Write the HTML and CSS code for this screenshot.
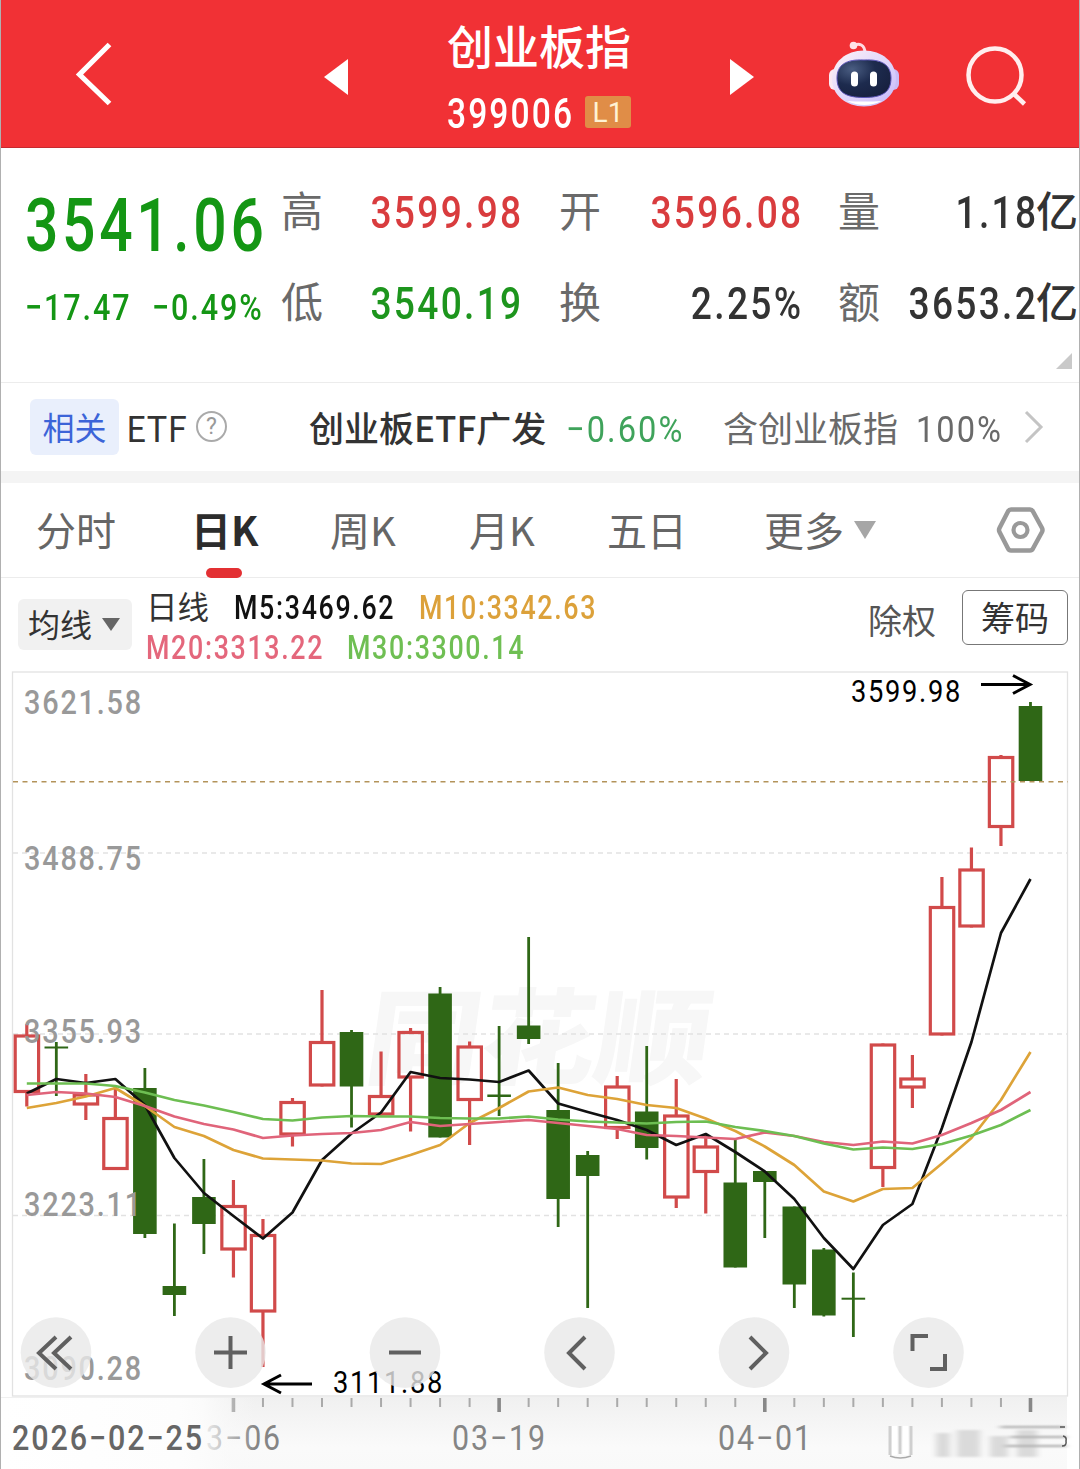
FILE: index.html
```html
<!DOCTYPE html>
<html lang="zh-CN">
<head>
<meta charset="utf-8">
<title>创业板指 399006</title>
<link rel="stylesheet" href="styles.css">
</head>
<body>
<main class="page">
  <header class="topbar">
    <svg class="back" width="40" height="66" viewBox="0 0 40 66"><path d="M35.500 3.500L5.500 33.500L35.500 62.500" fill="none" stroke="#fff" stroke-width="5.200"/></svg>
    <svg class="prev" width="24" height="36" viewBox="0 0 24 36"><path d="M24 0V36L0 18Z" fill="#fff"/></svg>
    <div class="heading">
      <h1>创业板指</h1>
      <div class="code"><span class="num">399006</span><span class="level">L1</span></div>
    </div>
    <svg class="next" width="24" height="36" viewBox="0 0 24 36"><path d="M0 0V36L24 18Z" fill="#fff"/></svg>
    <svg class="robot" width="72" height="67" viewBox="0 0 72 67">
      <defs>
        <linearGradient id="shell" x1="0" y1="0" x2="1" y2="1"><stop offset="0" stop-color="#fff3f7"/><stop offset=".6" stop-color="#dcd2fb"/><stop offset="1" stop-color="#c6b6f8"/></linearGradient>
        <radialGradient id="visor" cx=".28" cy=".25" r=".85"><stop offset="0" stop-color="#4a5d82"/><stop offset=".5" stop-color="#1d2b4e"/><stop offset="1" stop-color="#17203f"/></radialGradient>
      </defs>
      <path d="M25 5C31 1 37 4 37 12" fill="none" stroke="#ffdbe2" stroke-width="3"/>
      <circle cx="25.500" cy="4.500" r="3.800" fill="#ffe3e8"/>
      <rect x="1" y="28" width="12" height="21" rx="6" fill="#fbeaf3"/>
      <rect x="59" y="28" width="12" height="21" rx="6" fill="#c9bcf6"/>
      <path d="M36 9.500C54 9.500 68 21 68 38C68 54 54 65.500 36 65.500C18 65.500 4 54 4 38C4 21 18 9.500 36 9.500Z" fill="url(#shell)"/>
      <path d="M19 60Q36 68 54 60Q36 61 19 60Z" fill="#fff"/>
      <path d="M36 19C54 18 63 24 63 37C63 51 55 56.500 36 56.500C17 56.500 9 51 9 37C9 24 18 18 36 19Z" fill="url(#visor)" stroke="#5c55b8" stroke-width="1"/>
      <rect x="23" y="30.500" width="7" height="15" rx="3.500" fill="#fff"/><rect x="42" y="30.500" width="7" height="15" rx="3.500" fill="#fff"/>
    </svg>
    <svg class="search" width="62" height="62" viewBox="0 0 62 62"><circle cx="29" cy="29" r="26.500" fill="none" stroke="#ffeeee" stroke-width="4.500"/><path d="M47.500 47.500L58.500 58" stroke="#ffeeee" stroke-width="4.500"/></svg>
  </header>

  <section class="quote">
    <div class="price">
      <div class="last num">3541.06</div>
      <div class="change"><span class="num">−17.47</span><span class="num">−0.49%</span></div>
    </div>
    <dl class="stats">
      <dt>高</dt><dd class="up"><span class="num">3599.98</span></dd>
      <dt>开</dt><dd class="up"><span class="num">3596.08</span></dd>
      <dt>量</dt><dd><span class="num">1.18</span><span class="unit">亿</span></dd>
      <dt>低</dt><dd class="down"><span class="num">3540.19</span></dd>
      <dt>换</dt><dd><span class="num">2.25%</span></dd>
      <dt>额</dt><dd><span class="num">3653.2</span><span class="unit">亿</span></dd>
    </dl>
    <i class="corner"></i>
  </section>

  <section class="related">
    <span class="tag">相关</span><span class="etf">ETF</span><span class="help">?</span>
    <strong>创业板ETF广发</strong><span class="num pct">−0.60%</span>
    <span class="hold">含创业板指</span><span class="num share">100%</span>
    <svg class="more" width="20" height="34" viewBox="0 0 20 34"><path d="M2 2L17 17L2 32" fill="none" stroke="#c4c4c4" stroke-width="3"/></svg>
  </section>

  <nav class="tabs">
    <a>分时</a><a class="active">日K</a><a>周K</a><a>月K</a><a>五日</a><a class="menu">更多<i></i></a>
    <svg class="settings" width="50" height="48" viewBox="0 0 50 48"><path d="M15 3.500H34Q36 3.500 37 5.500L46 22Q47 24 46 26L37 42.500Q36 44.500 34 44.500H15Q13 44.500 12 42.500L3.500 26Q2.500 24 3.500 22L12 5.500Q13 3.500 15 3.500Z" fill="none" stroke="#999" stroke-width="4.500"/><circle cx="24.500" cy="24" r="7" fill="none" stroke="#999" stroke-width="4.200"/></svg>
  </nav>

  <section class="legend">
    <div class="picker">均线<i></i></div>
    <div class="averages">
      <div class="line"><b>日线</b><span class="num m5">M5:3469.62</span><span class="num m10">M10:3342.63</span></div>
      <div class="line"><span class="num m20">M20:3313.22</span><span class="num m30">M30:3300.14</span></div>
    </div>
    <span class="adjust">除权</span><span class="chips">筹码</span>
  </section>

  <svg id="chart" class="chart" width="1078" height="799" viewBox="1 670 1078 799">
    <defs>
      <linearGradient id="foot" x1="0" y1="0" x2="0" y2="1"><stop offset="0" stop-color="#f0f0f0"/><stop offset=".7" stop-color="#fafafa"/><stop offset="1" stop-color="#f9f9f9"/></linearGradient>
      <linearGradient id="fade" x1="0" y1="0" x2="1" y2="0"><stop offset="0" stop-color="#fff"/><stop offset=".7" stop-color="#fdfdfd"/><stop offset=".79" stop-color="#fcfcfc" stop-opacity=".9"/><stop offset="1" stop-color="#f8f8f8" stop-opacity="0"/></linearGradient>
      <filter id="soft" x="-20%" y="-20%" width="140%" height="140%"><feGaussianBlur stdDeviation="3 1"/></filter>
    </defs>
    <rect x="1" y="1397" width="1066" height="72" fill="url(#foot)"/>
    <g class="mark" transform="translate(362 1076) skewX(-8)"><text textLength="344" lengthAdjust="spacingAndGlyphs">同花顺</text></g>
    <g class="grid"><path d="M13 853H1067M13 1034H1067M13 1215.500H1067" stroke-dasharray="5 4"/><rect x="12.500" y="672" width="1055" height="724"/></g>
    <g id="ticks"></g>
    <g id="candles"></g>
    <path d="M13 781.700H1068" stroke="#b3935a" stroke-width="1.400" stroke-dasharray="5 4.500"/>
    <g id="averages"></g>
    <g class="axis">
      <text x="24" y="714" textLength="119">3621.58</text>
      <text x="24" y="870" textLength="119">3488.75</text>
      <text x="24" y="1043" textLength="119">3355.93</text>
      <text x="24" y="1216" textLength="119">3223.11</text>
      <text x="24" y="1380" textLength="119">3090.28</text>
    </g>
    <g class="note">
      <text x="851" y="701.500" textLength="111">3599.98</text><path d="M981 684.500H1029M1013 675.500L1030 684.500L1013 693.500"/>
      <text x="333" y="1392.500" textLength="111">3111.88</text><path d="M312 1384H265M281 1375L264 1384L281 1393"/>
    </g>
    <g class="dates">
      <text x="206" y="1449.500" textLength="76">3−06</text>
      <rect x="1" y="1398" width="255" height="71" fill="url(#fade)"/>
      <text class="first" x="12" y="1449.500" textLength="192">2026−02−25</text>
      <text x="452" y="1449.500" textLength="95">03−19</text>
      <text x="718" y="1449.500" textLength="95">04−01</text>
    </g>
    <g filter="url(#soft)">
      <path d="M936 1433H950V1457H936ZM957 1430H980V1457H957ZM990 1436H1008V1457H990ZM1017 1430H1037V1457H1017Z" fill="#dadada"/>
      <path d="M1000 1427H1064M1010 1437H1066M1005 1446H1066" stroke="#aaa" stroke-width="2"/>
    </g>
    <path d="M890 1426V1455M900 1426V1454M911 1426V1455" stroke="#cfcfcf" stroke-width="3"/>
    <path d="M894.500 1426V1455M905.500 1426V1455" stroke="#fff" stroke-width="5"/>
    <path d="M1060 1427H1065M1063 1436Q1067 1437 1066 1441Q1067 1446 1062 1446" stroke="#555" stroke-width="1.500" fill="none"/>
    <path d="M890 1456Q900 1460 911 1456" fill="none" stroke="#aaa" stroke-width="1.500"/>
    <g class="controls">
      <circle cx="56" cy="1352.600" r="35.300"/><circle cx="230.500" cy="1352.600" r="35.300"/><circle cx="405" cy="1352.600" r="35.300"/><circle cx="579.500" cy="1352.600" r="35.300"/><circle cx="754" cy="1352.600" r="35.300"/><circle cx="928.500" cy="1352.600" r="35.300"/>
      <path d="M56 1337L39 1353L56 1369M71 1337L54 1353L71 1369M214 1352.500H247M230.500 1336V1369M389 1352.500H421M585 1337L569 1353L585 1369M750 1337L766 1353L750 1369M912.500 1351V1336H928M945 1354V1369H930"/>
    </g>
  </svg>
</main>
<script src="chart.js"></script>
</body>
</html>
```
FILE: styles.css
```css
* { box-sizing: border-box; }
body { margin: 0; background: #fff; font-family: Roboto, "Noto Sans CJK SC", sans-serif; color: #333; }
.page { width: 1080px; height: 1469px; overflow: hidden; border-left: 1px solid #b0b0b0; border-right: 1px solid #b0b0b0; }
.num { display: inline-block; flex: none; font-family: Roboto, sans-serif; white-space: nowrap; letter-spacing: .062em; transform: scaleX(.825); transform-origin: left center; }

.topbar { display: flex; height: 148px; margin: 0 -1px; background: #f13135; border: solid #c62a2f; border-width: 0 1px 1px; color: #fff; }
.topbar svg { flex: none; }
.back { margin: 41px 0 0 73px; }
.prev { margin: 59px 0 0 210px; }
.heading { width: 184px; margin: 13px 0 0 99px; }
.heading h1 { margin: 0; height: 62px; font: 500 46px/62px "Noto Sans CJK SC", sans-serif; white-space: nowrap; }
.code { display: flex; height: 42px; margin-top: 18px; font-size: 42px; font-weight: 500; line-height: 42px; }
.code .num { width: 138px; transform: scaleX(.8); }
.level { width: 46px; height: 32px; margin-top: 3px; border-radius: 3px; background: #e08d47; color: #fff2d4; font-size: 28px; font-weight: 400; line-height: 33px; text-align: center; }
.next { margin: 59px 0 0 99px; }
.robot { margin: 41px 0 0 74px; }
.search { margin: 46px 0 0 66px; }

.quote { position: relative; display: flex; height: 235px; border-bottom: 1px solid #ececec; }
.price { width: 280px; padding: 37px 0 0 24px; color: #149614; }
.last { height: 82px; font-size: 74px; font-weight: 500; line-height: 82px; transform: scaleX(.795); }
.change { display: flex; height: 48px; margin-top: 17px; font-size: 37px; font-weight: 500; line-height: 48px; }
.change .num { width: 127px; }
.stats { display: grid; grid-template-columns: 42px 198px 80px 200px 79px 198px; grid-auto-rows: 91px; margin: 18px 0 0; font-size: 42px; line-height: 91px; }
.stats dt { justify-self: end; color: #6a6a6a; font-family: "Noto Sans CJK SC", sans-serif; transform: translateY(-3px); }
.stats dd { display: flex; justify-content: flex-end; margin: 0; font-family: "Noto Sans CJK SC", sans-serif; font-weight: 500; }
.stats .num { margin-right: -.05em; font-size: 45px; line-height: 93px; transform-origin: right center; }
.stats .unit { transform: translateY(-3px); }
.up { color: #d93c3e; }
.down { color: #1d951d; }
.corner { position: absolute; right: 7px; bottom: 13px; border: 8.500px solid; border-color: transparent #c9c9c9 #c9c9c9 transparent; }

.related { display: flex; height: 88px; padding-left: 29px; font: 35px/87px "Noto Sans CJK SC", sans-serif; white-space: nowrap; }
.related > * { flex: none; }
.tag { width: 89px; height: 56px; margin-top: 16px; border-radius: 6px; background: #e9effc; color: #3c64d8; font-size: 32px; line-height: 54px; text-align: center; }
.etf { width: 70px; margin-left: 7px; }
.help { width: 31px; height: 31px; margin: 28px 0 0; border: 2px solid #aaa; border-radius: 50%; color: #999; font: 23px/27px Roboto, sans-serif; text-align: center; }
.related strong { width: 257px; margin-left: 82px; font-weight: 500; }
.related .num { font-size: 37.500px; line-height: 93px; transform: scaleX(.87); }
.related .pct { width: 157px; color: #3fa35b; }
.hold { width: 193px; color: #6a6a6a; }
.share { width: 108px; color: #6a6a6a; }
.more { margin-top: 27px; }

.tabs { display: flex; height: 107px; border-top: 12px solid #f4f4f4; border-bottom: 1px solid #ececec; font: 40px/92px "Noto Sans CJK SC", sans-serif; color: #666; white-space: nowrap; padding-left: 35px; }
.tabs > * { flex: none; }
.tabs a { width: 138px; }
.tabs a:first-child { width: 155px; }
.tabs a:nth-child(3) { width: 139px; }
.tabs a:nth-child(5) { width: 157px; }
.tabs .active { position: relative; width: 139px; color: #2c2c2c; font-weight: 700; }
.active::after { content: ""; position: absolute; left: 15px; bottom: -1px; width: 36px; height: 10px; border-radius: 5px; background: #e33033; }
.tabs .menu { display: flex; width: 232px; }
.menu i { width: 22px; height: 18px; margin: 38px 0 0 10px; background: #a6a6a6; clip-path: polygon(0 0, 100% 0, 50% 100%); }
.settings { margin-top: 23px; }

.legend { display: flex; height: 92px; font-family: "Noto Sans CJK SC", sans-serif; }
.legend > * { flex: none; }
.picker { display: flex; width: 114px; height: 51px; margin: 21px 0 0 17px; padding-left: 10px; border-radius: 6px; background: #f1f1f1; font-size: 32px; line-height: 49px; white-space: nowrap; }
.picker i { width: 18px; height: 13px; margin: 19px 0 0 10px; background: #666; clip-path: polygon(0 0, 100% 0, 50% 100%); }
.averages { width: 734px; padding: 10px 0 0 14px; }
.line { display: flex; height: 40px; font-size: 32.500px; font-weight: 500; line-height: 41px; }
.line b { width: 88px; margin-top: -3px; font-size: 31.500px; font-weight: 400; white-space: nowrap; }
.line .m5 { width: 185px; color: #111; }
.m10 { color: #dca13a; }
.line .m20 { width: 201px; color: #e4677c; }
.m30 { color: #6fbf53; }
.adjust { width: 94px; margin: 22px 0 0 2px; font-size: 34px; line-height: 40px; color: #555; }
.chips { width: 106px; height: 55px; margin-top: 12px; border: 1px solid #777; border-radius: 6px; font-size: 34px; line-height: 51px; text-align: center; }

.chart { display: block; }
.chart text { font-family: Roboto, sans-serif; letter-spacing: .062em; }
.mark .mark-text, .mark text { font: 900 104px "Noto Sans CJK SC", sans-serif; fill: #f7f7f7; letter-spacing: 0; }
.grid { fill: none; stroke: #e2e2e2; stroke-width: 1.300; }
.axis text { font-size: 34px; font-weight: 500; fill: #999; }
.note text { font-size: 31px; fill: #000; }
.note path { fill: none; stroke: #000; stroke-width: 3; }
.dates text { font-size: 34.500px; fill: #858585; }
.dates .first { font-weight: 500; fill: #666; }
.controls circle { fill: #e9e9e9; fill-opacity: .8; }
.controls path { fill: none; stroke: #606060; stroke-width: 4; }
```
FILE: chart.js
```javascript
const NS = "http://www.w3.org/2000/svg";
const X0 = 26.8, STEP = 29.52;
const x = i => X0 + STEP * i;
const add = (parent, name, attrs) => {
  const el = document.createElementNS(NS, name);
  for (const key in attrs) el.setAttribute(key, attrs[key]);
  document.getElementById(parent).appendChild(el);
};

// direction, high, body top, body bottom, low
const candles = [
  ["r",1024,1034.5,1093,1106.5],["g",1042,1046.5,1048.5,1096],["r",1074,1093.5,1105.5,1120],["r",1087,1117,1170,1170],
  ["g",1068,1088,1234,1238],["g",1223.5,1286,1295,1316],["g",1159,1197,1224,1254],["r",1180,1205,1250.5,1277.5],
  ["r",1219,1234,1312.5,1367],["r",1098,1101,1135.5,1146.5],["r",990,1041,1086.5,1086.5],["g",1030,1032,1086.5,1127.5],
  ["r",1051.5,1095,1115.5,1115.5],["r",1028,1031,1078.5,1131.5],["g",987,993.5,1137.5,1137.5],["r",1041.5,1045.5,1101,1145],
  ["g",1026,1094.5,1097,1116],["g",937,1025.5,1039,1044],["g",1063,1110,1199,1227],["g",1151,1155,1176,1308],
  ["r",1076,1085.5,1129,1139],["g",1046,1111.5,1148,1159.5],["r",1079,1114.5,1198.5,1208],["r",1135,1145.5,1173,1213.5],
  ["g",1138,1182.5,1267.5,1267.5],["g",1171,1171,1182,1238],["g",1206.5,1206.5,1284.5,1308],["g",1248,1249.5,1315.5,1316.5],
  ["g",1272.5,1297.7,1299.7,1337],["r",1043.5,1043.5,1169,1187],["r",1055,1077.5,1088.5,1108],["r",877,906,1035.5,1035.5],
  ["r",847.5,868.5,927.5,927.5],["r",755,756,828,846],["g",702,706,781,781]
];
candles.forEach(([dir, high, top, bottom, low], i) => {
  const cx = x(i);
  if (dir === "g") {
    add("candles", "path", { d: `M${cx} ${high}V${low}`, stroke: "#2f6716", "stroke-width": 2.8 });
    add("candles", "rect", { x: cx - 11.8, y: top, width: 23.6, height: bottom - top, fill: "#2f6716" });
  } else {
    add("candles", "path", { d: `M${cx} ${high}V${top + 1}M${cx} ${bottom - 1}V${low}`, stroke: "#d14a4a", "stroke-width": 3.2 });
    add("candles", "rect", { x: cx - 11.6, y: top + 1.5, width: 23.4, height: bottom - top - 3, fill: "none", stroke: "#d14a4a", "stroke-width": 3.2 });
  }
});

const averages = {
  "#111": [1093.5,1079,1083,1079,1105,1158,1193,1216,1238.5,1212.5,1160,1133.5,1112.5,1072,1078,1079.5,1082,1070.5,1103.5,1112,1120,1130,1145,1134,1152,1171.5,1199,1238,1269,1225,1204,1128,1042,933,879],
  "#dda338": [1108,1103,1096.5,1088,1106,1127,1136,1150,1158.5,1159.5,1160.5,1163.5,1164,1155,1145,1123,1108,1091.5,1087.5,1095,1099,1105,1108,1118.5,1131,1146.5,1165,1191.5,1201.5,1189,1188,1163.5,1138,1100,1052],
  "#e0647a": [1095,1092,1093.5,1097,1106,1116.5,1124,1129.5,1138,1135.5,1134,1133,1130,1122,1126,1124,1122,1120,1123,1126,1129,1135,1136,1137.5,1139,1132.5,1136,1142,1145,1141.5,1143.5,1135,1123,1110,1092],
  "#6dbe52": [1083.5,1083.5,1083.5,1086,1092.5,1100,1105.5,1112,1119,1120.5,1117.5,1116,1116.5,1116.5,1118,1118.5,1118.5,1116.5,1119.5,1121.5,1122.5,1123.5,1122,1121.5,1127,1131,1136,1143.5,1149.5,1147.5,1149,1144,1135.5,1125,1110]
};
for (const color in averages) {
  add("averages", "polyline", {
    points: averages[color].map((y, i) => `${x(i)},${y}`).join(" "),
    fill: "none", stroke: color, "stroke-width": 2.7, "stroke-linejoin": "round"
  });
}

for (let i = 7; i < 35; i++) {
  const major = (i - 7) % 9 === 0;
  add("ticks", "path", { d: `M${x(i)} 1398V${major ? 1412 : 1407}`, stroke: major ? "#888" : "#aaa", "stroke-width": major ? 3.6 : 2 });
}
document.querySelectorAll(".axis text, .note text, .dates text").forEach(t => t.setAttribute("lengthAdjust", "spacingAndGlyphs"));
```
